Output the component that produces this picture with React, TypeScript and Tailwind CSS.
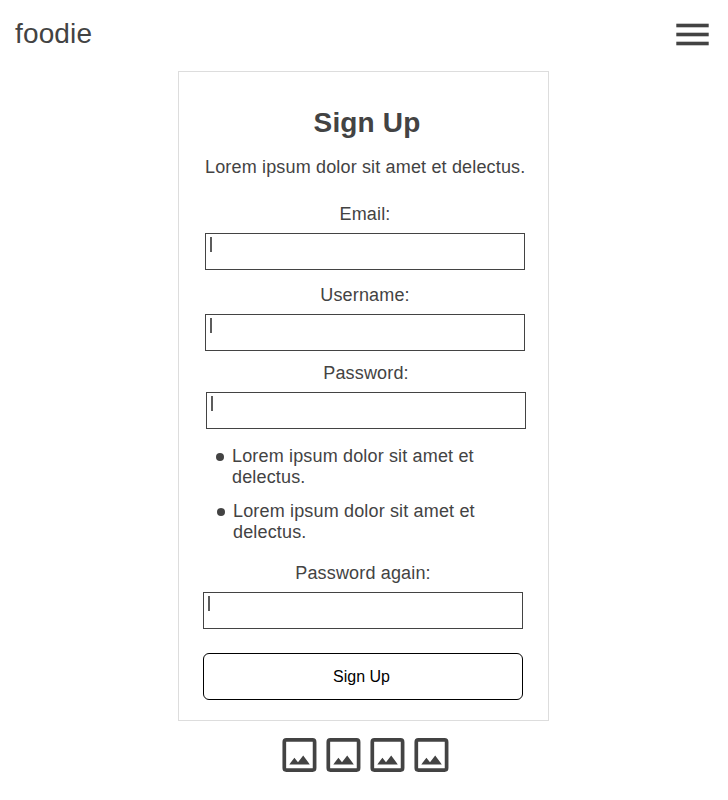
import React from "react";

function Field({ label, className }: { label: string; className: string }) {
  return (
    <label className={`block w-80 ${className}`}>
      <span className="block text-center text-[18px] leading-[21px]">{label}</span>
      <span className="mt-2 block h-[37px] border border-[#434343] pl-1 pt-[3px]">
        <span className="block h-[15px] w-[2px] bg-[#5c5c5c]" />
      </span>
    </label>
  );
}

function Bullet({ className }: { className: string }) {
  return (
    <li className={`flex ${className}`}>
      <span className="mt-[7px] mr-2 size-2 shrink-0 rounded-full bg-[#434343]" />
      <span className="w-[260px]">Lorem ipsum dolor sit amet et<br />delectus.</span>
    </li>
  );
}

function Picture() {
  return (
    <svg width="34" height="34" viewBox="0 0 34 34" fill="none" overflow="visible">
      <rect x="2.3" y="1.9" width="30.3" height="30.2" rx="2" stroke="#434343" strokeWidth="3.7" />
      <path d="M7.3 26.4L12.4 19.8L16 24.2L21.2 17.5L27.8 26.4Z" fill="#434343" />
    </svg>
  );
}

export default function App() {
  return (
    <div className="h-[800px] w-[728px] overflow-hidden bg-white font-['Liberation_Sans',Arial,sans-serif] text-[#434343]">
      <header className="flex h-[71px] items-start justify-between pl-[15px] pr-[19px]">
        <span className="pt-[18px] text-[28px] leading-[32px] tracking-[0.15px]">foodie</span>
        <svg className="mt-[23px]" width="33" height="23" viewBox="0 0 33 23" fill="#434343">
          <rect x="0.3" y="0.7" width="32.4" height="3.6" />
          <rect x="0.3" y="9.7" width="32.4" height="3.6" />
          <rect x="0.3" y="18.7" width="32.4" height="3.6" />
        </svg>
      </header>
      <main className="ml-[178px] h-[650px] w-[371px] border border-[#ddd] pt-[34px] text-[18px] leading-[21px] tracking-[0.16px]">
        <h1 className="pl-[7px] text-center text-[28px] leading-[34px] font-bold tracking-[0.15px]">Sign Up</h1>
        <p className="mt-[17px] ml-[26px] w-80 whitespace-nowrap text-center">Lorem ipsum dolor sit amet et delectus.</p>
        <Field label="Email:" className="mt-[26px] ml-[26px]" />
        <Field label="Username:" className="mt-[15px] ml-[26px]" />
        <Field label="Password:" className="mt-3 ml-[27px]" />
        <ul className="mt-[17px]">
          <Bullet className="ml-[37px]" />
          <Bullet className="mt-[13px] ml-[38px]" />
        </ul>
        <Field label="Password again:" className="mt-5 ml-6" />
        <button className="mt-6 ml-6 block h-[47px] w-80 rounded-md border border-black pr-[3px] text-[16px] leading-[18px] tracking-normal text-black">Sign Up</button>
      </main>
      <footer className="mt-[17px] ml-[282px] flex gap-[10px]">
        <Picture /><Picture /><Picture /><Picture />
      </footer>
    </div>
  );
}
